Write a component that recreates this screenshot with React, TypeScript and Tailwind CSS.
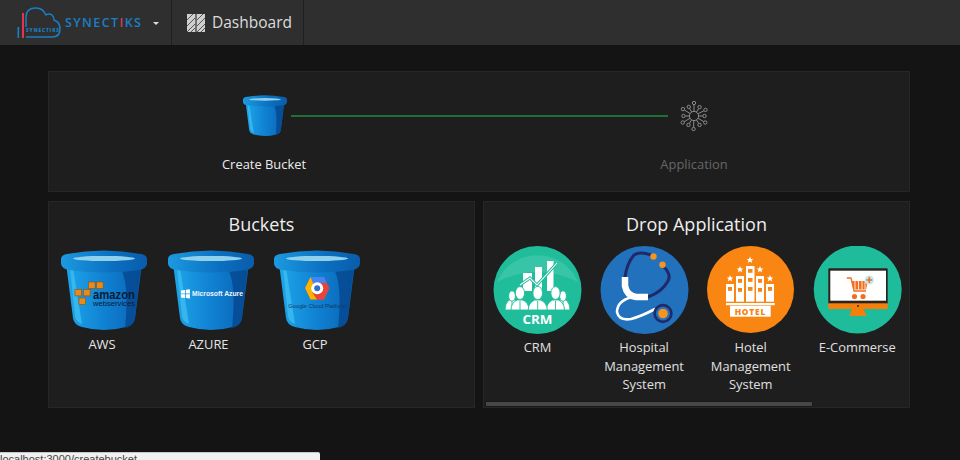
import { useId } from 'react'
import type { ReactNode } from 'react'

// Blue bucket, shared by the stepper and the Buckets panel
function Bucket({ className, children }: { className: string; children?: ReactNode }) {
  const id = useId()
  return (
    <svg viewBox="0 0 86 80" className={className}>
      <defs>
        <linearGradient id={`${id}body`} x1="0" x2="1" y1="0" y2="0">
          <stop offset="0" stopColor="#1ea6ea" />
          <stop offset="0.5" stopColor="#1081d2" />
          <stop offset="1" stopColor="#0a62b4" />
        </linearGradient>
        <linearGradient id={`${id}rim`} x1="0" x2="1" y1="0" y2="0">
          <stop offset="0" stopColor="#1c9ae0" />
          <stop offset="0.6" stopColor="#0b6fc0" />
          <stop offset="1" stopColor="#0a5cab" />
        </linearGradient>
      </defs>
      <path d="M5 13 L12 68 Q13 75 21 77 Q43 83 65 77 Q73 75 74 68 L81 13 Z" fill={`url(#${id}body)`} />
      <path d="M9 18 L12 18 L21 74 Q15 72 14 66 Z" fill="#3fc0f2" opacity="0.75" />
      <path d="M58 16 Q69 30 64 78 Q73 76 74 68 L80 16 Z" fill="#05478f" opacity="0.8" />
      <path d="M0 9 Q0 5 6 4 Q43 -3 80 4 Q86 5 86 9 L86 14 Q85 19 78 20 Q43 25 8 20 Q1 19 0 14 Z" fill={`url(#${id}rim)`} />
      <ellipse cx="43" cy="8.5" rx="31" ry="2.6" fill="#8fd0ec" />
      {children}
    </svg>
  )
}

function AwsMark() {
  const cubes = [
    [27.5, 32], [35.5, 32],
    [14, 39.5], [22.5, 39.5],
    [18, 48],
  ]
  return (
    <g>
      {cubes.map(([x, y]) => (
        <rect key={`${x}-${y}`} x={x} y={y} width="6.6" height="6.4" fill="#e98a1d" stroke="#8a5310" strokeWidth="0.6" />
      ))}
      <text x="32" y="49" fontFamily="Liberation Sans, sans-serif" fontSize="12.5" fontWeight="700" fill="#0b1b33" textLength="42" lengthAdjust="spacingAndGlyphs">amazon</text>
      <text x="32" y="55.5" fontFamily="Liberation Sans, sans-serif" fontSize="6.8" fill="#0b1b33" textLength="42" lengthAdjust="spacingAndGlyphs">webservices</text>
    </g>
  )
}

function AzureMark() {
  return (
    <g>
      <path d="M13 40.5 L17 40 L17 43.5 L13 43.5 Z M17.8 39.8 L22 39.2 L22 43.5 L17.8 43.5 Z M13 44.3 L17 44.3 L17 48 L13 47.4 Z M17.8 44.3 L22 44.3 L22 48.6 L17.8 48 Z" fill="#fff" />
      <text x="24" y="46.3" fontFamily="Liberation Sans, sans-serif" fontSize="6.6" fontWeight="700" fill="#eef6fc" textLength="51" lengthAdjust="spacingAndGlyphs">Microsoft Azure</text>
    </g>
  )
}

function GcpMark() {
  return (
    <g>
      <path d="M36.5 27 L50 27 L55.3 38 L50 49.5 L36.5 49.5 L31 38 Z" fill="#ea4335" />
      <path d="M36.5 27 L50 27 L52.5 33 L43 33 L35 33 Z" fill="#4285f4" />
      <path d="M31 38 L36.5 27 L39 33 L38 42 L43 49.5 L36.5 49.5 Z" fill="#f4b400" />
      <path d="M43 49.5 L50 49.5 L55.3 38 L49 41 Z" fill="#e8453c" />
      <circle cx="43.2" cy="38.3" r="6" fill="#fff" />
      <circle cx="43.2" cy="38.3" r="3" fill="#2f6fd0" />
      <text x="14.3" y="58.3" fontFamily="Liberation Sans, sans-serif" fontSize="5.6" fill="#123a66" textLength="58" lengthAdjust="spacingAndGlyphs">Google Cloud Platform</text>
    </g>
  )
}

function NetworkIcon() {
  const angles = [-90, -58, -28, 0, 30, 58, 92, 122, 150, 180, 212, 240]
  return (
    <svg viewBox="0 0 32 32" className="h-[32px] w-[32px]" fill="none" stroke="#8c8c8c" strokeWidth="1">
      <circle cx="16" cy="16" r="4.6" />
      {angles.map((a, i) => {
        const r = i % 2 === 0 ? 13 : 10.5
        const rad = (a * Math.PI) / 180
        const cos = Math.cos(rad)
        const sin = Math.sin(rad)
        return (
          <g key={a}>
            <line x1={16 + 4.6 * cos} y1={16 + 4.6 * sin} x2={16 + (r - 1.8) * cos} y2={16 + (r - 1.8) * sin} />
            <circle cx={16 + r * cos} cy={16 + r * sin} r="1.7" />
          </g>
        )
      })}
    </svg>
  )
}

function CrmIcon() {
  const people = [
    [19, 3.4, 7, 50],
    [70, 3.4, 7, 50],
    [27, 4.6, 9, 47],
    [62.5, 4.6, 9, 47],
    [44.7, 4.8, 9.5, 47],
  ]
  return (
    <svg viewBox="0 0 89 89" className="h-[89px] w-[89px]">
      <circle cx="44.5" cy="44" r="44" fill="#20bd9b" />
      <path d="M4 36 A44 44 0 0 1 85 36 Q44 16 4 36 Z" fill="#4ccbb0" opacity="0.55" />
      <rect x="30" y="27" width="9" height="18" fill="#fff" />
      <rect x="42" y="21" width="7" height="24" fill="#fff" />
      <rect x="54" y="15" width="6.5" height="30" fill="#fff" />
      <path d="M27 39 L37 32 L44 39 L64 17" fill="none" stroke="#20bd9b" strokeWidth="3" />
      <path d="M27 39 L37 32 L44 39 L64 17" fill="none" stroke="#fff" strokeWidth="1.1" />
      {people.map(([x, head, body, cy]) => (
        <g key={x} fill="#fff" stroke="#20bd9b" strokeWidth="0.9">
          <path d={`M${x - body} 64 Q${x - body} 57 ${x - 3} 54 L${x + 3} 54 Q${x + body} 57 ${x + body} 64 Z`} />
          <ellipse cx={x} cy={cy} rx={head} ry={head + 1.8} />
          <path d={`M${x} 55 V64`} fill="none" />
        </g>
      ))}
      <text x="29.5" y="78" fontFamily="Open Sans, sans-serif" fontSize="12" fontWeight="700" fill="#fff" textLength="30" lengthAdjust="spacingAndGlyphs">CRM</text>
    </svg>
  )
}

function HospitalIcon() {
  return (
    <svg viewBox="0 0 89 89" className="h-[89px] w-[89px]" fill="none">
      <circle cx="44.5" cy="44" r="44" fill="#2271bd" />
      <path d="M51 9 Q40 5 34 9 Q27 17 25 31" stroke="#1f2a66" strokeWidth="3" />
      <path d="M62 19 Q72 28 68 35 Q62 46 48 51" stroke="#1f2a66" strokeWidth="3" />
      <path d="M25 31 L25 40 Q27 50 36 51 L48 51" stroke="#fff" strokeWidth="6.5" />
      <path d="M32 51 Q17 55 17 66 Q19 75 31 73 Q42 70 55 63" stroke="#fff" strokeWidth="2.6" />
      <circle cx="53.5" cy="10.5" r="3.2" fill="#f7941d" />
      <circle cx="62.5" cy="18.7" r="3.2" fill="#f7941d" />
      <circle cx="63" cy="67.5" r="8.4" stroke="#1f2a66" strokeWidth="2.6" />
      <circle cx="63" cy="67.5" r="4.8" fill="#f7941d" />
    </svg>
  )
}

function HotelIcon() {
  const towers = [
    [19, 38, 8],
    [29, 30, 8],
    [39, 20, 8.5],
    [49, 30, 8],
    [59, 38, 8],
  ]
  const star = (x: number, y: number) =>
    `M${x} ${y - 3.4} L${x + 1} ${y - 1} L${x + 3.4} ${y - 1} L${x + 1.5} ${y + 0.6} L${x + 2.2} ${y + 3} L${x} ${y + 1.6} L${x - 2.2} ${y + 3} L${x - 1.5} ${y + 0.6} L${x - 3.4} ${y - 1} L${x - 1} ${y - 1} Z`
  return (
    <svg viewBox="0 0 88 89" className="h-[89px] w-[88px]">
      <circle cx="43.5" cy="43.5" r="43.5" fill="#f98512" />
      {[[43, 14], [33, 23.5], [53, 23.5], [23, 32.5], [63, 32.5]].map(([x, y]) => (
        <path key={x} d={star(x, y)} fill="#fff" />
      ))}
      {towers.map(([x, y, w]) => (
        <g key={x}>
          <rect x={x} y={y} width={w} height={55.7 - y} fill="#fff" />
          {Array.from({ length: Math.floor((46 - y) / 9) + 1 }).map((_, i) => (
            <rect key={i} x={x + 2} y={y + 3 + i * 9} width={w - 4} height="3.8" fill="#f98512" />
          ))}
        </g>
      ))}
      <rect x="19" y="57" width="48.7" height="2.2" fill="#fff" />
      <rect x="23" y="59.7" width="40.7" height="11" fill="#fff" />
      <text x="43.4" y="68.6" textAnchor="middle" fontFamily="Open Sans, sans-serif" fontSize="8.4" fontWeight="800" letterSpacing="0.8" fill="#f98512">HOTEL</text>
    </svg>
  )
}

function ShopIcon() {
  return (
    <svg viewBox="0 0 89 89" className="h-[89px] w-[89px]">
      <circle cx="44.7" cy="43.5" r="44" fill="#1fbc9c" />
      <rect x="15.3" y="22.3" width="59.4" height="36" rx="1" fill="#2a2420" />
      <rect x="17.3" y="24.7" width="55.7" height="30" fill="#fff" />
      <rect x="15.3" y="57.3" width="59.4" height="5.7" fill="#f57f0a" />
      <path d="M39 63 L50.5 63 L53.7 70 L36.3 70 Z" fill="#f57f0a" />
      <circle cx="45" cy="60" r="0.9" fill="#222" />
      <path d="M33.7 32 L38 32 L41 45 L53 45" fill="none" stroke="#f26f21" strokeWidth="1.3" />
      <path d="M38.5 35 L55 35 L53 43.5 L40.5 43.5 Z" fill="#f26f21" />
      <path d="M42 35 V43.5 M45.5 35 V43.5 M49 35 V43.5 M52 35 V43.5" stroke="#fff" strokeWidth="0.8" />
      <circle cx="41.5" cy="50.5" r="2.6" fill="#f26f21" />
      <circle cx="50" cy="50.5" r="2.6" fill="#f26f21" />
      <circle cx="56.3" cy="34" r="4.6" fill="#bfeaf2" />
      <path d="M56.3 31 V37 M53.3 34 H59.3" stroke="#f26f21" strokeWidth="1.6" />
    </svg>
  )
}

const buckets = [
  { name: 'AWS', mark: <AwsMark /> },
  { name: 'AZURE', mark: <AzureMark /> },
  { name: 'GCP', mark: <GcpMark /> },
]

const applications = [
  { name: 'CRM', icon: <CrmIcon /> },
  { name: 'Hospital Management System', icon: <HospitalIcon /> },
  { name: 'Hotel Management System', icon: <HotelIcon /> },
  { name: 'E-Commerse', icon: <ShopIcon /> },
]

export default function App() {
  return (
    <div className="relative h-[460px] w-[960px] overflow-hidden bg-[#141414] font-['Open_Sans',sans-serif]">
      <header className="flex h-[45px] bg-[#2f2f2f]">
        <div className="flex w-[172px] items-center border-r border-[#1f1f1f] pl-[17px]">
          <svg viewBox="0 0 46 32" className="h-[32px] w-[46px]">
            <rect x="0.5" y="20" width="1.6" height="11" fill="#1a7fc4" />
            <rect x="5" y="6" width="2" height="25" fill="#e8324f" />
            <path d="M9 20 V10 Q9 1 19 1 Q26 1 29 8 Q32 6 35 8 Q37 10 37 13 Q43 15 43 22 Q43 30 35 30 L9 30" fill="none" stroke="#1a7fc4" strokeWidth="1.5" />
            <text x="9" y="25" fontFamily="Open Sans, sans-serif" fontSize="4.7" fontWeight="800" fill="#1a7fc4" textLength="33">SYNECTIKS</text>
          </svg>
          <span className="ml-[2px] mt-[1px] text-[12.5px] font-semibold tracking-[1.4px] text-[#1a7fc4]">
            SYNECT<span className="text-[#c9405c]">I</span>KS
          </span>
          <span className="ml-[11px] mt-[1px] h-0 w-0 border-x-[3px] border-t-[3px] border-x-transparent border-t-[#dddddd]" />
        </div>
        <div className="flex w-[132px] items-center border-r border-[#1f1f1f] pl-[15px]">
          <svg viewBox="0 0 18 18" className="h-[18px] w-[18px]">
            <rect width="8.4" height="18" fill="#cfcfcf" />
            <rect x="9.6" width="8.4" height="18" fill="#cfcfcf" />
            <path d="M0 6 L6 0 M0 12 L8 4 M0 18 L8 10 M4 18 L8 14 M10 6 L16 0 M10 12 L18 4 M10 18 L18 10 M14 18 L18 14" stroke="#555" strokeWidth="1" />
          </svg>
          <span className="ml-[7px] mt-[1px] text-[15.5px] text-[#dcdcdc]">Dashboard</span>
        </div>
      </header>

      <main className="ml-[48px] mt-[26px] w-[862px]">
        <section className="h-[121px] border border-[#262626] bg-[#1e1e1e]">
          <div className="mt-[23px] flex items-center pl-[194px]">
            <Bucket className="h-[41px] w-[44px]" />
            <div className="ml-[4px] h-[2px] w-[377px] bg-[#1c7236]" />
            <div className="ml-[10px]">
              <NetworkIcon />
            </div>
          </div>
          <div className="mt-[19px] flex text-[12.9px] leading-[18px]">
            <div className="ml-[155px] w-[120px] text-center text-[#ececec]">Create Bucket</div>
            <div className="ml-[310px] w-[120px] text-center text-[#666666]">Application</div>
          </div>
        </section>

        <div className="mt-[9px] flex gap-[8px]">
          <section className="h-[207px] w-[427px] border border-[#262626] bg-[#1e1e1e]">
            <h2 className="mt-[10px] text-center text-[18px] font-medium leading-[25px] text-[#eeeeee]">Buckets</h2>
            <div className="mt-[13px] flex gap-[20.5px] pl-[12px]">
              {buckets.map((b) => (
                <div key={b.name} className="w-[86px] text-center">
                  <Bucket className="h-[80px] w-[86px]">{b.mark}</Bucket>
                  <p className="mt-[5px] pr-[4px] text-[12.9px] leading-[18px] text-[#e6e6e6]">{b.name}</p>
                </div>
              ))}
            </div>
          </section>

          <section className="flex h-[207px] w-[427px] flex-col border border-[#262626] bg-[#1e1e1e]">
            <h2 className="mt-[10px] text-center text-[18px] font-medium leading-[25px] text-[#eeeeee]">Drop Application</h2>
            <div className="mt-[9px] flex flex-1 gap-[17.6px] pl-[9px]">
              {applications.map((a) => (
                <div key={a.name} className="w-[89px] text-center">
                  <div className="flex justify-center">{a.icon}</div>
                  <p className="mt-[3px] text-[12.9px] leading-[18.5px] text-[#e0e0e0]">{a.name}</p>
                </div>
              ))}
            </div>
            <div className="ml-[1px] h-[6px] w-[424px]">
              <div className="h-[6px] w-[328px] rounded-[1px] border border-[#181818] bg-[#474747]" />
            </div>
          </section>
        </div>
      </main>

      <div className="absolute bottom-0 left-0 h-[8px] w-[320px] overflow-hidden rounded-tr-[2px] border-t border-[#c8c8c8] bg-[#f1f1f1] font-['Liberation_Sans',sans-serif] text-[11px] leading-[13px] text-[#444444]">
        localhost:3000/createbucket
      </div>
    </div>
  )
}
